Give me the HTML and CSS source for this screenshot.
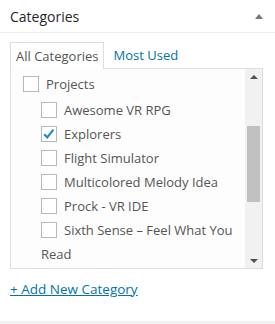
FILE: index.html
```html
<!DOCTYPE html>
<html lang="en">
<head>
  <meta charset="UTF-8">
  <title>Categories</title>
  <link rel="stylesheet" href="styles.css">
</head>
<body>
  <div class="postbox">
    <div class="hndle">
      <h2>Categories</h2>
      <span class="toggle"></span>
    </div>
    <div class="inside">
      <ul class="tabs">
        <li class="tab active">All Categories</li>
        <li class="tab"><a href="#">Most Used</a></li>
      </ul>
      <div class="panel">
        <ul class="checklist">
          <li><label><span class="cb"></span>Projects</label>
            <ul class="children">
              <li><label><span class="cb"></span>Awesome VR RPG</label></li>
              <li><label><span class="cb"><svg viewBox="0 0 16 16" width="14" height="14"><path d="M2.5 8.2 L6 11.8 L13 3" fill="none" stroke="#1e8cbe" stroke-width="2.4"/></svg></span>Explorers</label></li>
              <li><label><span class="cb"></span>Flight Simulator</label></li>
              <li><label><span class="cb"></span>Multicolored Melody Idea</label></li>
              <li><label><span class="cb"></span>Prock - VR IDE</label></li>
              <li><label><span class="cb"></span>Sixth Sense – Feel What You Read</label></li>
            </ul>
          </li>
        </ul>
        <div class="scrollbar">
          <span class="arrow up"></span>
          <span class="thumb"></span>
          <span class="track"></span>
          <span class="arrow down"></span>
        </div>
      </div>
      <a class="add-new" href="#">+ Add New Category</a>
    </div>
  </div>
</body>
</html>
```

FILE: styles.css
```css
body { margin:0; background:#f1f1f1; font-family:"Open Sans", sans-serif;
       font-size:13px; color:#555; }
ul { list-style:none; margin:0; padding:0; }
.postbox { background:#fff; height:321px; box-sizing:border-box; }
.hndle { height:33px; border-bottom:1px solid #eee; display:flex;
         align-items:center; justify-content:space-between; padding:0 12px 0 10px;
         box-sizing:border-box; }
.hndle h2 { margin:0; font-size:14px; font-weight:400; color:#23282d; }
.toggle { width:0; height:0; border-left:4px solid transparent;
          border-right:4px solid transparent; border-bottom:5px solid #72777c; }
.inside { padding:8px 12px 0 10px; }
.tabs { display:flex; height:27px; }
.tab { padding:0 5px; line-height:27px; border:1px solid transparent;
       border-bottom:none; }
.tab + .tab { margin-left:3px; }
.tab.active { border-color:#ddd; background:#fff; color:#555; position:relative;
              top:1px; }
.tab a { color:#0073aa; text-decoration:none; }
.panel { display:flex; height:201px; border:1px solid #ddd; background:#fdfdfd;
         box-sizing:border-box; overflow:hidden; }
.checklist { flex:1; padding:3px 0 0 12px; }
.checklist li { line-height:24px; }
.children { margin-top:2px; padding-left:18px; }
.cb { display:inline-flex; align-items:center; justify-content:center;
      width:16px; height:16px; box-sizing:border-box;
      border:1px solid #b4b9be; background:#fff; vertical-align:middle;
      margin:-3px 7px 0 0; }
.scrollbar { width:17px; background:#f1f1f1; display:flex;
             flex-direction:column; align-items:center; }
.arrow { width:0; height:0; border-left:4px solid transparent;
         border-right:4px solid transparent; margin:6px 0; }
.arrow.up { border-bottom:4px solid #505050; }
.arrow.down { border-top:4px solid #505050; margin-bottom:5px; }
.thumb { width:13px; height:76px; background:#c1c1c1; margin-top:41px; }
.track { flex:1; }
.add-new { display:inline-block; margin-top:10px; line-height:20px;
           color:#0073aa; font-size:13.5px; }
```
